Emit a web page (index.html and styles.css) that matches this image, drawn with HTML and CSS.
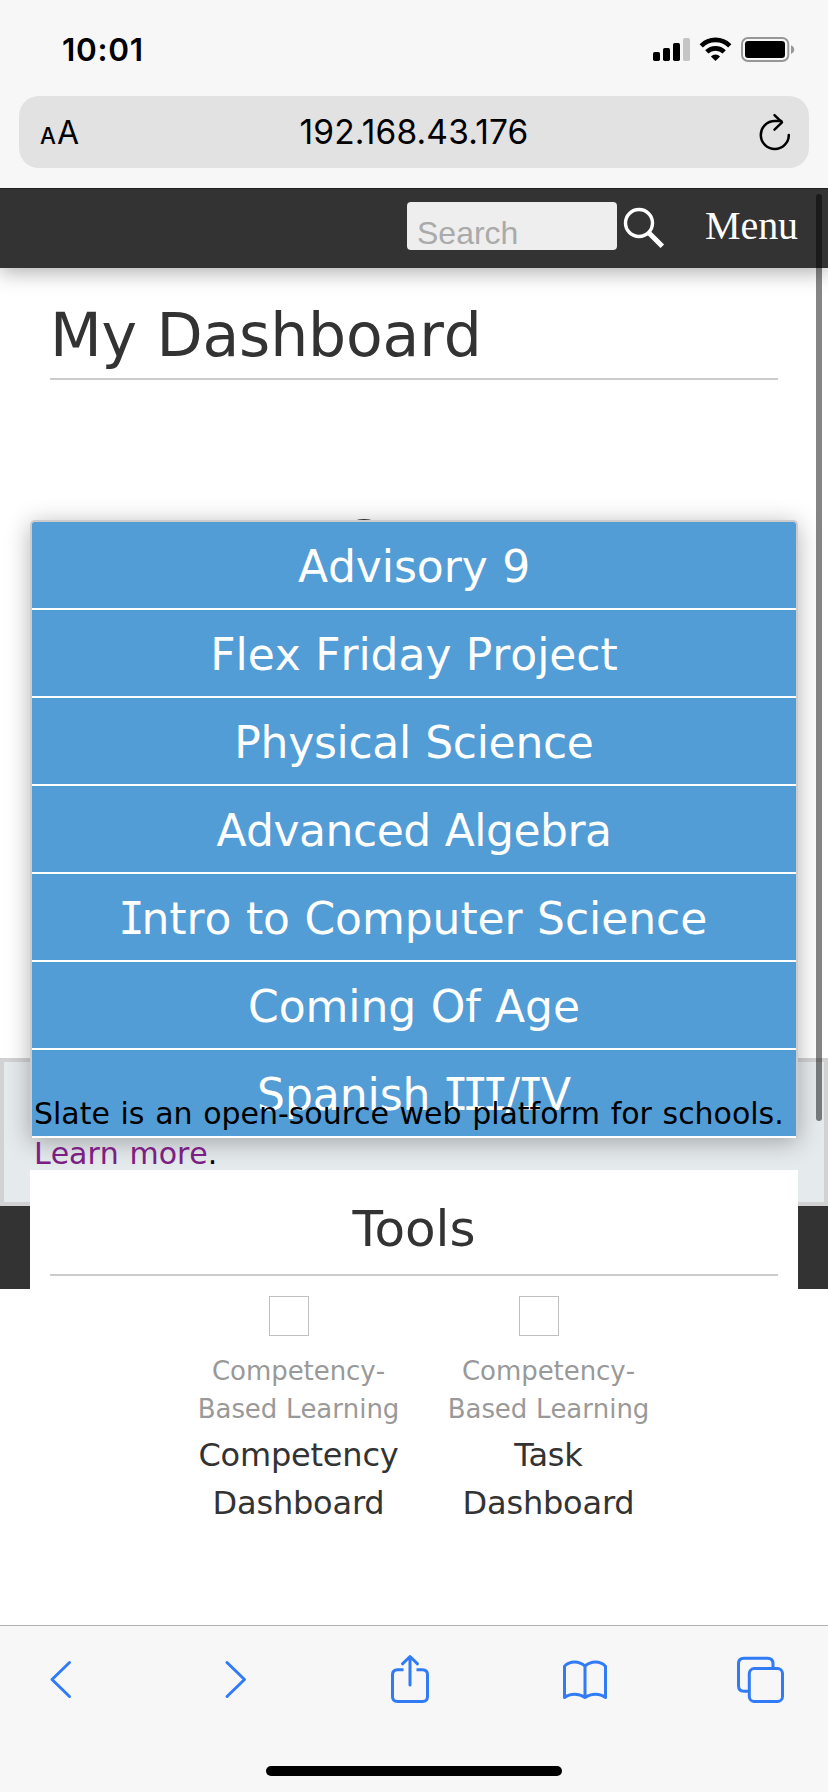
FILE: index.html
```
<!DOCTYPE html>
<html lang="en">
<head>
<meta charset="utf-8">
<title>My Dashboard</title>
<link rel="stylesheet" href="styles.css">
</head>
<body>
<div class="screen">
  <header class="browser-top">
    <div class="status">
      <span class="time">10:01</span>
      <svg class="status-icons" width="144" height="28" viewBox="652 36 144 28">
        <rect x="653" y="52" width="7" height="9" rx="1.7"/>
        <rect x="663" y="48" width="7" height="13" rx="1.7"/>
        <rect x="673" y="43" width="7" height="18" rx="1.7"/>
        <rect x="683" y="38" width="7" height="23" rx="1.7" fill="#c5c5c5"/>
        <g fill="none" stroke="#000" stroke-width="4.600">
          <path d="M701.2 45.8a20.3 20.3 0 0 1 28.6 0"/>
          <path d="M706.8 51.9a12.4 12.4 0 0 1 17.4 0"/>
        </g>
        <path d="M715.5 61l-4.6-4.6a6.6 6.6 0 0 1 9.2 0z"/>
        <rect x="742" y="38" width="46.300" height="23" rx="6" fill="none" stroke="#979797" stroke-width="2"/>
        <rect x="745" y="41" width="40" height="17" rx="3.300"/>
        <path d="M791 45.300q3.200 1.200 3.200 4.300t-3.200 4.300z" fill="#979797"/>
      </svg>
    </div>
    <div class="address">
      <span class="aa"><span class="small-a">A</span><span class="big-a">A</span></span>
      <span class="url">192.168.43.176</span>
      <svg class="reload" width="34" height="40" viewBox="757 112 34 40" fill="none" stroke="#000" stroke-width="2.500" stroke-linecap="round" stroke-linejoin="round">
        <path d="M788.800 135a14 14 0 1 1-14-14h6.500"/>
        <path d="M774.500 115.200l7.500 7.200-7.500 7.200"/>
      </svg>
    </div>
  </header>

  <nav class="site-nav">
    <input class="search" type="text" placeholder="Search">
    <svg class="magnifier" width="42" height="42" viewBox="623 207 42 42" fill="none" stroke="#fff">
      <circle cx="639" cy="223" r="13.500" stroke-width="3.400"/>
      <path d="M648.500 232.500l13.800 13.800" stroke-width="5"/>
    </svg>
    <a class="menu">Menu</a>
  </nav>

  <main class="content">
    <h1 class="title">My Dashboard</h1>
    <div class="peek"></div>
    <ul class="courses">
      <li>Advisory 9</li>
      <li>Flex Friday Project</li>
      <li class="tight">Physical Science</li>
      <li class="tighter">Advanced Algebra</li>
      <li><span class="slab">I</span>ntro to Computer Science</li>
      <li>Coming Of Age</li>
      <li>Spanish <span class="slab">III</span>/<span class="slab">I</span>V</li>
    </ul>
    <section class="tools">
      <h2 class="tools-title">Tools</h2>
      <div class="tool-list">
        <div class="tool">
          <div class="tool-icon"></div>
          <div class="tool-group">Competency-<br>Based Learning</div>
          <div class="tool-name">Competency<br>Dashboard</div>
        </div>
        <div class="tool">
          <div class="tool-icon"></div>
          <div class="tool-group">Competency-<br>Based Learning</div>
          <div class="tool-name">Task<br>Dashboard</div>
        </div>
      </div>
    </section>
  </main>

  <footer class="site-footer">
    <div class="about"><p class="about-text">Slate is an open-source web platform for schools.<br><a class="more">Learn more</a>.</p></div>
    <div class="base"></div>
  </footer>

  <div class="scrollbar"></div>

  <div class="toolbar">
    <div class="buttons">
      <svg viewBox="30 1650 60 60"><path d="M69.500 1662.500L52 1679.500l17.500 17"/></svg>
      <svg viewBox="205 1650 60 60"><path d="M227 1662.500l17.500 17-17.500 17"/></svg>
      <svg viewBox="380 1650 60 60">
        <path d="M403.500 1669.800h-6q-5 0-5 5v21.700q0 5 5 5h25q5 0 5-5v-21.700q0-5-5-5h-6" stroke-linecap="butt"/>
        <path d="M410 1685v-28M402.500 1663.800l7.500-7.300 7.500 7.300"/>
      </svg>
      <svg viewBox="555 1650 60 60">
        <path d="M585 1697.500v-31.300c-6-5.500-15-5.500-20.500 0v31.300c5.500-4.500 14.500-4.500 20.500 0c6-4.500 15-4.500 20.500 0v-31.300c-5.500-5.500-14.500-5.500-20.500 0"/>
      </svg>
      <svg viewBox="730 1650 60 60">
        <path d="M748 1691.300h-4q-5.500 0-5.500-5.500v-22q0-5.500 5.500-5.500h23.500q5.500 0 5.500 5.500v4"/>
        <rect x="749.300" y="1668.500" width="33.200" height="33" rx="5"/>
      </svg>
    </div>
    <div class="home-bar"></div>
  </div>
</div>
</body>
</html>
```
FILE: styles.css
```
* { box-sizing: border-box; }
body { margin: 0; background: #fff; }
.screen {
  position: relative;
  display: flex;
  flex-direction: column;
  width: 828px;
  height: 1792px;
  overflow: hidden;
  font-family: "DejaVu Sans", Verdana, sans-serif;
  font-kerning: none;
  letter-spacing: -0.004em;
  word-spacing: 0.034em;
}

/* Browser chrome */
.browser-top {
  position: relative;
  z-index: 4;
  flex: none;
  height: 188px;
  background: #f7f7f7;
  font-family: Inter, sans-serif;
  font-kerning: auto;
  word-spacing: 0;
}
.status {
  display: flex;
  justify-content: space-between;
  height: 96px;
  padding: 36px 32px 0 62px;
}
.time { font-size: 31.5px; font-weight: 600; line-height: 28px; letter-spacing: 0.7px; }
.address {
  display: grid;
  grid-template-columns: 100px 1fr 100px;
  align-items: center;
  height: 72px;
  margin: 0 19px;
  padding: 0 18px 0 21px;
  border-radius: 20px;
  background: #e2e2e2;
}
.aa { display: flex; align-items: baseline; gap: 1px; letter-spacing: 0; }
.small-a { font-size: 22.5px; font-weight: 500; }
.big-a { font-size: 32px; }
.url { justify-self: center; margin-right: 3px; font-size: 33.5px; line-height: 72px; letter-spacing: 0.15px; }
.reload { justify-self: end; }

/* Site navigation */
.site-nav {
  position: relative;
  z-index: 3;
  display: flex;
  flex: none;
  align-items: flex-start;
  height: 80px;
  padding: 13px 30px 0 407px;
  border-top: 1px solid #222;
  background: #333;
  box-shadow: 0 4px 20px rgba(0, 0, 0, 0.33);
}
.search {
  width: 210px;
  height: 48px;
  padding: 14px 10px 0;
  border: 0;
  border-radius: 4px;
  background: #eee;
  font: 32px/34px "Liberation Sans", Arial, sans-serif;
}
.search::placeholder { color: #aaa; opacity: 1; }
.magnifier { margin: 5px 0 0 6px; }
.menu {
  margin-left: auto;
  color: #fff;
  font: 40px/48px "Liberation Serif", serif;
  letter-spacing: -0.1px;
}

/* Dashboard content; the lists run past the bottom of the fixed-height area */
.content {
  position: relative;
  z-index: 1;
  flex: none;
  height: 790px;
  padding: 27px 30px 0;
  color: #333;
}
.title {
  margin: 0 20px;
  padding: 0 0 3px;
  border-bottom: 2px solid #ccc;
  font-size: 60px;
  font-weight: 400;
  line-height: 80px;
  letter-spacing: -0.15px;
}
.peek {
  width: 16px;
  height: 4px;
  margin: 139px 0 -3px 326px;
  border-radius: 50% 50% 0 0;
  background: #333;
}
.courses {
  position: relative;
  margin: 0;
  padding: 0;
  border: 2px solid #ccc;
  border-bottom: 0;
  border-radius: 5px 5px 0 0;
  background: #529dd6;
  box-shadow: 0 4px 24px rgba(0, 0, 0, 0.3);
  list-style: none;
}
.courses li {
  height: 88px;
  padding-top: 4px;
  border-bottom: 2px solid #fff;
  color: #fff;
  font-size: 44px;
  line-height: 82px;
  text-align: center;
}
.courses .tight { letter-spacing: -0.3px; }
.courses .tighter { letter-spacing: -0.5px; }
/* Capital I with serifs, pulled in to a proportional width */
.slab {
  margin-left: -0.06em;
  margin-right: 0.08em;
  font-family: "DejaVu Sans Mono", monospace;
  letter-spacing: -0.15em;
}
.tools {
  position: relative;
  height: 400px;
  margin-top: 32px;
  padding: 19px 20px 0;
  background: #fff;
}
.tools-title {
  margin: 0;
  padding-bottom: 5px;
  border-bottom: 2px solid #ccc;
  font-size: 50px;
  font-weight: 400;
  font-kerning: normal;
  line-height: 80px;
  text-align: center;
}
.tool-list {
  display: flex;
  justify-content: center;
  gap: 30px;
  padding: 20px 0 0 19px;
}
.tool { width: 220px; text-align: center; }
.tool-icon {
  width: 40px;
  height: 40px;
  margin: 0 0 16px 80px;
  border: 1px solid #c0c0c0;
}
.tool-group { color: #999; font-size: 26px; line-height: 38px; }
.tool-name { margin-top: 3px; font-size: 32px; line-height: 48px; font-kerning: normal; letter-spacing: -0.2px; }

/* Footer; its text is painted above the course list */
.site-footer { flex: none; }
.about {
  height: 148px;
  padding: 32px 30px 0;
  border: 4px solid #d2d2d2;
  background: #e5eaed;
}
.about-text {
  position: relative;
  z-index: 2;
  margin: 0;
  color: #000;
  font-size: 30px;
  letter-spacing: -0.03px;
  word-spacing: 0.04em;
  line-height: 40px;
  white-space: nowrap;
}
.more { color: #7b2082; }
.base { height: 83px; background: #333; }

.scrollbar {
  position: absolute;
  z-index: 4;
  top: 194px;
  left: 816px;
  width: 6px;
  height: 927px;
  border-radius: 3px;
  background: rgba(0, 0, 0, 0.48);
}

/* Browser toolbar */
.toolbar {
  position: relative;
  z-index: 5;
  height: 167px;
  margin-top: auto;
  padding: 24px 30px 0;
  border-top: 1px solid #b2b2b2;
  background: #f7f7f7;
}
.buttons { display: flex; gap: 115px; }
.buttons svg {
  flex: none;
  width: 60px;
  height: 60px;
  fill: none;
  stroke: #327bf7;
  stroke-width: 3;
  stroke-linecap: round;
  stroke-linejoin: round;
}
.home-bar {
  width: 296px;
  height: 10px;
  margin: 56px auto 0;
  border-radius: 5px;
  background: #000;
}
```
